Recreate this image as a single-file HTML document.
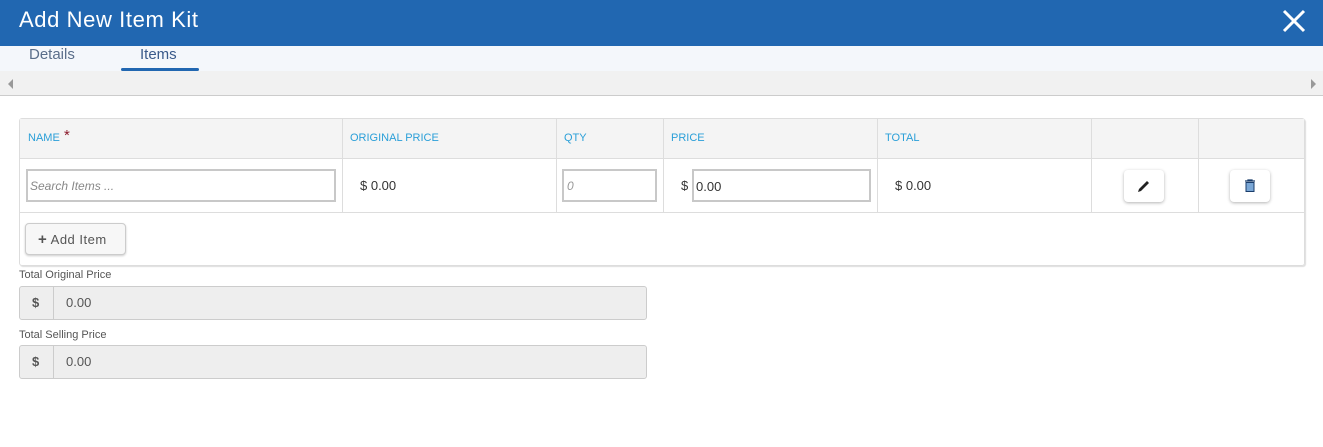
<!DOCTYPE html>
<html><head><style>
*{box-sizing:border-box;margin:0;padding:0}
body{width:1323px;height:447px;background:#fff;font-family:"Liberation Sans",sans-serif;position:relative;overflow:hidden;color:#333}
.a{position:absolute}
.th{position:absolute;top:132px;font-size:11px;color:#2a9fd8;line-height:13px}
.vl{position:absolute;top:118px;height:95px;width:1px;background:#ddd}
.inp{position:absolute;border:2px solid #c8c8c8;background:#fff;height:33px;font-size:12px}
.btn{position:absolute;background:#fff;border-radius:4px;box-shadow:0 1px 3px rgba(0,0,0,.3);width:40px;height:32px;top:170px}
</style></head><body>
<div class="a" style="left:0;top:0;width:1323px;height:46px;background:#2167b1"></div>
<div class="a" style="left:19px;top:7px;font-size:22px;color:#fff;letter-spacing:.6px">Add New Item Kit</div>
<svg class="a" style="left:1282px;top:9px" width="24" height="24"><path d="M2 2L22 22M22 2L2 22" stroke="#fff" stroke-width="3"/></svg>
<div class="a" style="left:0;top:46px;width:1323px;height:25px;background:#f4f7fb"></div>
<div class="a" style="left:29px;top:46px;font-size:15px;color:#5a6e8a">Details</div>
<div class="a" style="left:140px;top:46px;font-size:15px;color:#3a5a8a">Items</div>
<div class="a" style="left:121px;top:68px;width:78px;height:3px;background:#2167b1;border-radius:2px"></div>
<div class="a" style="left:0;top:71px;width:1323px;height:25px;background:#f1f1f1;border-bottom:1px solid #ccc"></div>
<div class="a" style="left:8px;top:79px;width:0;height:0;border-top:5px solid transparent;border-bottom:5px solid transparent;border-right:5px solid #999"></div>
<div class="a" style="left:1311px;top:79px;width:0;height:0;border-top:5px solid transparent;border-bottom:5px solid transparent;border-left:5px solid #999"></div>

<div class="a" style="left:19px;top:118px;width:1286px;height:148px;border:1px solid #ddd;border-radius:3px;box-shadow:1px 1px 1px #ddd"></div>
<div class="a" style="left:20px;top:119px;width:1284px;height:40px;background:#f4f4f4;border-bottom:1px solid #ddd"></div>
<div class="a" style="left:20px;top:212px;width:1284px;height:1px;background:#ddd"></div>
<div class="vl" style="left:342px"></div><div class="vl" style="left:556px"></div><div class="vl" style="left:663px"></div><div class="vl" style="left:877px"></div><div class="vl" style="left:1091px"></div><div class="vl" style="left:1198px"></div>
<div class="th" style="left:28px">NAME</div>
<div class="a" style="left:64px;top:127px;color:#8b1a2b;font-size:15px">*</div>
<div class="th" style="left:350px">ORIGINAL PRICE</div>
<div class="th" style="left:564px">QTY</div>
<div class="th" style="left:671px">PRICE</div>
<div class="th" style="left:885px">TOTAL</div>
<div class="inp" style="left:26px;top:169px;width:310px;padding:8px 0 0 2px;color:#888;font-style:italic">Search Items ...</div>
<div class="a" style="left:360px;top:178px;font-size:13px">$ 0.00</div>
<div class="inp" style="left:562px;top:169px;width:95px;padding:8px 0 0 3px;color:#999;font-style:italic">0</div>
<div class="a" style="left:681px;top:178px;font-size:13px">$</div>
<div class="inp" style="left:692px;top:169px;width:179px;padding:8px 0 0 2px;font-size:13px">0.00</div>
<div class="a" style="left:895px;top:178px;font-size:13px">$ 0.00</div>
<div class="btn" style="left:1124px"><svg style="margin:9px 0 0 13px" width="14" height="14"><path d="M1 13L2 10L10 2L12 4L4 12Z" fill="#222"/></svg></div>
<div class="btn" style="left:1230px"><svg style="margin:9px 0 0 14px" width="12" height="13"><path d="M1 2H11M4 2V1H8V2" stroke="#1a3d6b" stroke-width="1.3" fill="none"/><rect x="2" y="3.5" width="8" height="9" fill="#7aa7d6" stroke="#1a3d6b"/></svg></div>
<div class="a" style="left:25px;top:223px;width:101px;height:32px;border:1px solid #ccc;border-radius:4px;background:#f7f7f7;box-shadow:0 1px 2px #ccc;font-size:13px;color:#555;padding:7px 0 0 12px;letter-spacing:.5px"><b style="font-size:15px">+</b> Add Item</div>

<div class="a" style="left:19px;top:269px;font-size:11px;color:#555">Total Original Price</div>
<div class="a" style="left:19px;top:286px;width:628px;height:34px;background:#eee;border:1px solid #ccc;border-radius:3px"></div>
<div class="a" style="left:53px;top:287px;width:1px;height:32px;background:#ccc"></div>
<div class="a" style="left:32px;top:295px;font-size:13px;color:#555;font-weight:bold">$</div>
<div class="a" style="left:66px;top:295px;font-size:13px;color:#555">0.00</div>
<div class="a" style="left:19px;top:329px;font-size:11px;color:#555">Total Selling Price</div>
<div class="a" style="left:19px;top:345px;width:628px;height:34px;background:#eee;border:1px solid #ccc;border-radius:3px"></div>
<div class="a" style="left:53px;top:346px;width:1px;height:32px;background:#ccc"></div>
<div class="a" style="left:32px;top:354px;font-size:13px;color:#555;font-weight:bold">$</div>
<div class="a" style="left:66px;top:354px;font-size:13px;color:#555">0.00</div>
</body></html>
